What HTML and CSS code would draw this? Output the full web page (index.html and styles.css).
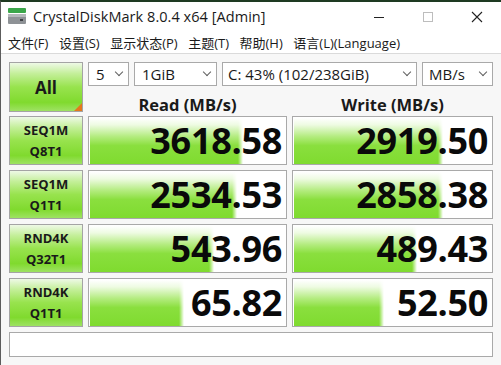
FILE: index.html
```html
<!DOCTYPE html>
<html lang="zh">
<head>
<meta charset="utf-8">
<title>CrystalDiskMark</title>
<link rel="stylesheet" href="styles.css">
</head>
<body>
<div class="window">
  <div class="titlebar">
    <svg class="app-icon" width="18" height="17" viewBox="0 0 18 17">
      <rect x="0" y="0" width="18" height="5" rx="1" fill="#3aa64a"/>
      <rect x="0" y="6" width="18" height="10" rx="1" fill="#8e9296"/>
      <rect x="0" y="6" width="18" height="3" fill="#b4b8bb"/>
      <rect x="12" y="11" width="3" height="2" fill="#3d4045"/>
    </svg>
    <span class="title">CrystalDiskMark 8.0.4 x64 [Admin]</span>
    <div class="controls">
      <svg class="ctl" width="12" height="12" viewBox="0 0 12 12"><line x1="1" y1="6.5" x2="11" y2="6.5" stroke="#222" stroke-width="1"/></svg>
      <svg class="ctl" width="12" height="12" viewBox="0 0 12 12"><rect x="1.5" y="1.5" width="9" height="9" fill="none" stroke="#bdbdbd" stroke-width="1"/></svg>
      <svg class="ctl" width="12" height="12" viewBox="0 0 12 12"><path d="M1 1 L11 11 M11 1 L1 11" stroke="#222" stroke-width="1.1"/></svg>
    </div>
  </div>
  <div class="menubar">
    <span>文件(F)</span>
    <span>设置(S)</span>
    <span>显示状态(P)</span>
    <span>主题(T)</span>
    <span>帮助(H)</span>
    <span>语言(L)(Language)</span>
  </div>
  <div class="main">
    <div class="top">
      <div class="btn all">All</div>
      <div class="top-right">
        <div class="selects">
          <div class="sel s1"><span>5</span><i class="caret"></i></div>
          <div class="sel s2"><span>1GiB</span><i class="caret"></i></div>
          <div class="sel s3"><span>C: 43% (102/238GiB)</span><i class="caret"></i></div>
          <div class="sel s4"><span>MB/s</span><i class="caret"></i></div>
        </div>
        <div class="heads">
          <div class="head">Read (MB/s)</div>
          <div class="head">Write (MB/s)</div>
        </div>
      </div>
    </div>
    <div class="rows">
      <div class="row">
        <div class="btn label">SEQ1M<br>Q8T1</div>
        <div class="cell"><div class="bar" style="width:153px"></div><span class="val">3618.58</span></div>
        <div class="cell"><div class="bar" style="width:149px"></div><span class="val">2919.50</span></div>
      </div>
      <div class="row">
        <div class="btn label">SEQ1M<br>Q1T1</div>
        <div class="cell"><div class="bar" style="width:147px"></div><span class="val">2534.53</span></div>
        <div class="cell"><div class="bar" style="width:149px"></div><span class="val">2858.38</span></div>
      </div>
      <div class="row">
        <div class="btn label">RND4K<br>Q32T1</div>
        <div class="cell"><div class="bar" style="width:124px"></div><span class="val">543.96</span></div>
        <div class="cell"><div class="bar" style="width:123px"></div><span class="val">489.43</span></div>
      </div>
      <div class="row">
        <div class="btn label">RND4K<br>Q1T1</div>
        <div class="cell"><div class="bar" style="width:94px"></div><span class="val">65.82</span></div>
        <div class="cell"><div class="bar" style="width:90px"></div><span class="val">52.50</span></div>
      </div>
    </div>
    <div class="status"></div>
  </div>
</div>
</body>
</html>
```

FILE: styles.css
```css
* { box-sizing: border-box; }
html, body {
  margin: 0;
  padding: 0;
  width: 501px;
  height: 365px;
  overflow: hidden;
  background: #f7f7f7;
}
.window {
  width: 501px;
  height: 365px;
  border-top: 2px solid #1e3a22;
  border-left: 1px solid #5c5c5c;
  background: #f7f7f7;
  font-family: "Open Sans", "Noto Sans CJK SC", sans-serif;
  color: #111;
}
.titlebar {
  height: 28px;
  background: #ffffff;
  display: flex;
  align-items: center;
  padding-left: 7px;
}
.app-icon { flex: none; margin-top: 1px; }
.title {
  margin-left: 7px;
  font-size: 14.5px;
  color: #1a1a1a;
  letter-spacing: 0.05px;
}
.controls {
  margin-left: auto;
  display: flex;
  gap: 37px;
  padding-right: 18px;
  padding-top: 1px;
}
.ctl { display: block; }
.menubar {
  height: 24px;
  background: #ffffff;
  border-bottom: 1px solid #dadada;
  display: flex;
  align-items: center;
  gap: 10.5px;
  padding-left: 7px;
  padding-top: 1px;
  font-size: 13px;
  font-family: "Open Sans", "Noto Sans CJK SC", sans-serif;
  color: #1a1a1a;
}
.main {
  padding: 8px 0 0 8px;
}
.top {
  display: flex;
  gap: 5px;
  height: 50px;
}
.btn {
  border: 1px solid #a4a4a4;
  background: linear-gradient(to bottom, #eef9e6 0%, #c4ef9a 22%, #98e34e 50%, #80da2e 82%, #9ee263 100%);
  display: flex;
  align-items: center;
  justify-content: center;
  text-align: center;
  font-weight: 700;
  color: #1a1a1a;
}
.all {
  width: 74px;
  height: 50px;
  font-size: 17px;
  position: relative;
}
.all::after {
  content: "";
  position: absolute;
  right: 0;
  bottom: 0;
  border-style: solid;
  border-width: 0 0 8px 8px;
  border-color: transparent transparent #e5781e transparent;
}
.top-right {
  width: 405px;
  display: flex;
  flex-direction: column;
}
.selects {
  display: flex;
  gap: 5px;
  height: 24px;
}
.sel {
  height: 24px;
  border: 1px solid #a9a9a9;
  background: #fff;
  display: flex;
  align-items: center;
  padding-left: 7px;
  padding-right: 6px;
  font-size: 15px;
  color: #1a1a1a;
  white-space: nowrap;
}
.s1 { width: 41px; }
.s2 { width: 83px; }
.s3 { width: 195px; padding-left: 5px; }
.s4 { width: 71px; padding-left: 6px; }
.caret {
  margin-left: auto;
  width: 6px;
  height: 6px;
  border-right: 1px solid #606060;
  border-bottom: 1px solid #606060;
  transform: rotate(45deg);
  margin-top: -4px;
}
.heads {
  display: grid;
  grid-template-columns: 199px 201px;
  gap: 5px;
  height: 26px;
}
.head {
  text-align: center;
  font-weight: 700;
  font-size: 16.5px;
  line-height: 26px;
  padding-top: 6px;
  color: #1a1a1a;
}
.rows {
  margin-top: 4px;
  display: flex;
  flex-direction: column;
  gap: 5px;
}
.row {
  display: grid;
  grid-template-columns: 74px 199px 201px;
  gap: 5px;
  height: 49px;
}
.label {
  font-size: 13px;
  line-height: 21px;
}
.cell {
  position: relative;
  border: 1px solid #a9a9a9;
  background: #fff;
  display: flex;
  align-items: center;
  justify-content: flex-end;
  padding-right: 4px;
  overflow: hidden;
}
.bar {
  position: absolute;
  left: 1px;
  top: 1px;
  bottom: 0;
  background: linear-gradient(to bottom, #ffffff 0%, #eefbe2 15%, #b4ec80 40%, #8adf3e 60%, #7fdb2f 100%);
  -webkit-mask-image: linear-gradient(to right, #000 calc(100% - 5px), transparent);
  mask-image: linear-gradient(to right, #000 calc(100% - 5px), transparent);
}
.val {
  position: relative;
  font-size: 36px;
  font-weight: 700;
  line-height: 1;
  color: #0a0a0a;
  letter-spacing: -0.3px;
  padding-top: 1px;
}
.status {
  margin-top: 5px;
  width: 484px;
  height: 25px;
  border: 1px solid #a9a9a9;
  background: #fff;
}
```
